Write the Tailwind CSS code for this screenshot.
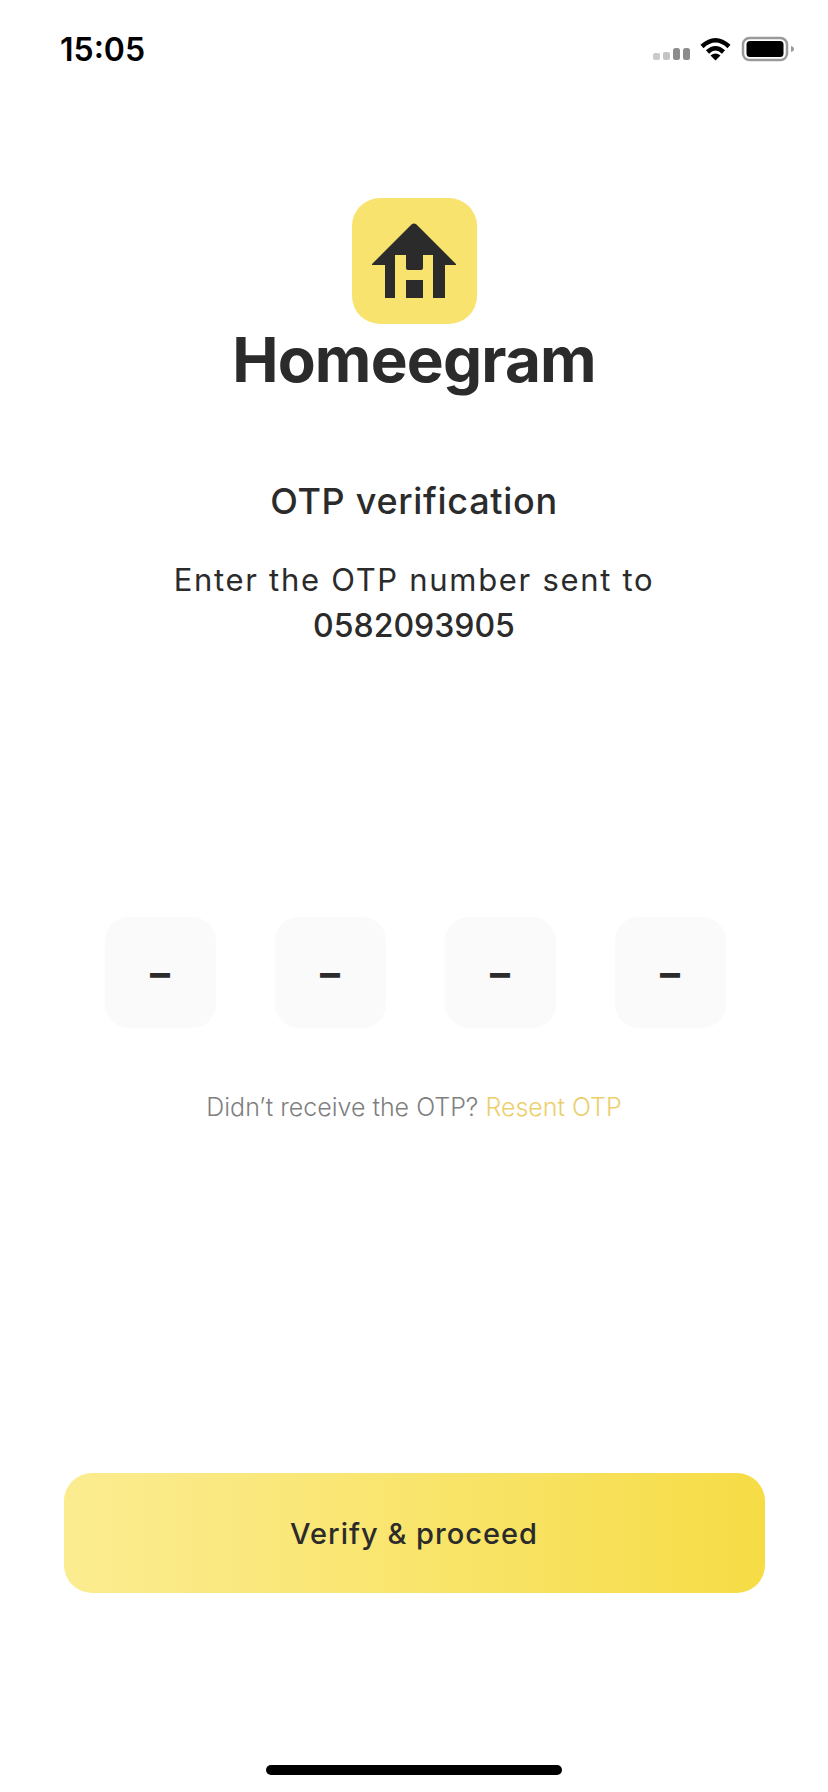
<!DOCTYPE html>
<html lang="en">
<head>
    <meta charset="UTF-8">
    <title>OTP verification</title>
    <script src="https://cdn.jsdelivr.net/npm/@tailwindcss/browser@4"></script>
</head>
<body class="bg-white">
<div class="w-[828px] h-[1792px] flex flex-col items-center bg-white text-[#2b2b2b] font-['Inter',sans-serif] overflow-hidden">
    <!--status bar-->
    <div class="w-full h-[98px] pl-[60px] pr-[32px] flex justify-between items-center shrink-0">
        <span class="pt-[2px] text-[32px] font-semibold text-black">15:05</span>
        <svg class="w-[146px] h-[28px]" viewBox="0 0 146 28" fill="none">
            <rect x="3" y="18" width="7" height="7" rx="2" fill="#cacaca"/>
            <rect x="13" y="17" width="7" height="8" rx="2" fill="#c4c4c4"/>
            <rect x="23" y="13" width="7" height="12" rx="2.5" fill="#8c8c8c"/>
            <rect x="33" y="13" width="7" height="12" rx="2.5" fill="#8c8c8c"/>
            <path d="M52 11.500Q65.500 -1 79 11.500" stroke="#000" stroke-width="4.500"/>
            <path d="M57.500 17Q65.500 9.500 73.500 17" stroke="#000" stroke-width="4.500"/>
            <path d="M60.500 20.500Q65.500 16.500 70.500 20.500L65.500 25.500Z" fill="#000"/>
            <rect x="93" y="3" width="44" height="22" rx="6.500" stroke="#9a9a9a" stroke-width="2.500"/>
            <rect x="96.500" y="6" width="37" height="16" rx="3.500" fill="#000"/>
            <path d="M141 11C143 11.500 144 12.500 144 14C144 15.500 143 16.500 141 17Z" fill="#9a9a9a"/>
        </svg>
    </div>

    <!--logo-->
    <div class="mt-[100px] ml-[1px] w-[125px] h-[126px] rounded-[28px] bg-[#f8e36f] shrink-0">
        <svg class="w-[125px] h-[126px]" viewBox="0 0 125 126" fill="none">
            <path fill-rule="evenodd" fill="#2b2b2b" d="M20 66L59.500 26.500Q62 24.500 64.500 26.500L104 66Q104.500 67 103 67H93V100H33V67H21Q19.500 67 20 66ZM43 57V100H54V82H71V100H81V57H71V70Q71 72 69 72H56Q54 72 54 70V57Z"/>
        </svg>
    </div>
    <div class="mt-[-2px] h-[76px] leading-[76px] text-[62px] font-bold tracking-[-0.8px]">Homeegram</div>

    <!--heading-->
    <h1 class="mt-[81px] text-[36px] leading-[44px] font-medium tracking-[0.7px]">OTP verification</h1>
    <p class="mt-[34px] text-[31px] leading-[46px] font-normal tracking-[1.7px] text-center">Enter the OTP number sent to<br><span class="text-[32px] font-medium tracking-[0px]">0582093905</span></p>

    <!--otp inputs-->
    <div class="mt-[268px] ml-[2px] flex gap-[59px]">
        <div class="w-[111px] h-[111px] rounded-[24px] bg-[#fafafa] flex items-center justify-center text-[40px] font-bold">–</div>
        <div class="w-[111px] h-[111px] rounded-[24px] bg-[#fafafa] flex items-center justify-center text-[40px] font-bold">–</div>
        <div class="w-[111px] h-[111px] rounded-[24px] bg-[#fafafa] flex items-center justify-center text-[40px] font-bold">–</div>
        <div class="w-[111px] h-[111px] rounded-[24px] bg-[#fafafa] flex items-center justify-center text-[40px] font-bold">–</div>
    </div>
    <p class="mt-[64px] text-[25px] leading-[30px] font-light text-[#7f7f7f]">Didn’t receive the OTP? <span class="text-[#ebcf6d]">Resent OTP</span></p>

    <!--verify button-->
    <button class="mt-[351px] pt-[2px] w-[701px] h-[120px] rounded-[28px] bg-gradient-to-r from-[#fbec90] via-[#f9e56c] to-[#f6dc44] text-[29px] font-medium tracking-[1px] shrink-0">Verify &amp; proceed</button>

    <!--home indicator-->
    <div class="mt-[172px] w-[296px] h-[10px] rounded-full bg-black shrink-0"></div>
</div>
</body>
</html>
